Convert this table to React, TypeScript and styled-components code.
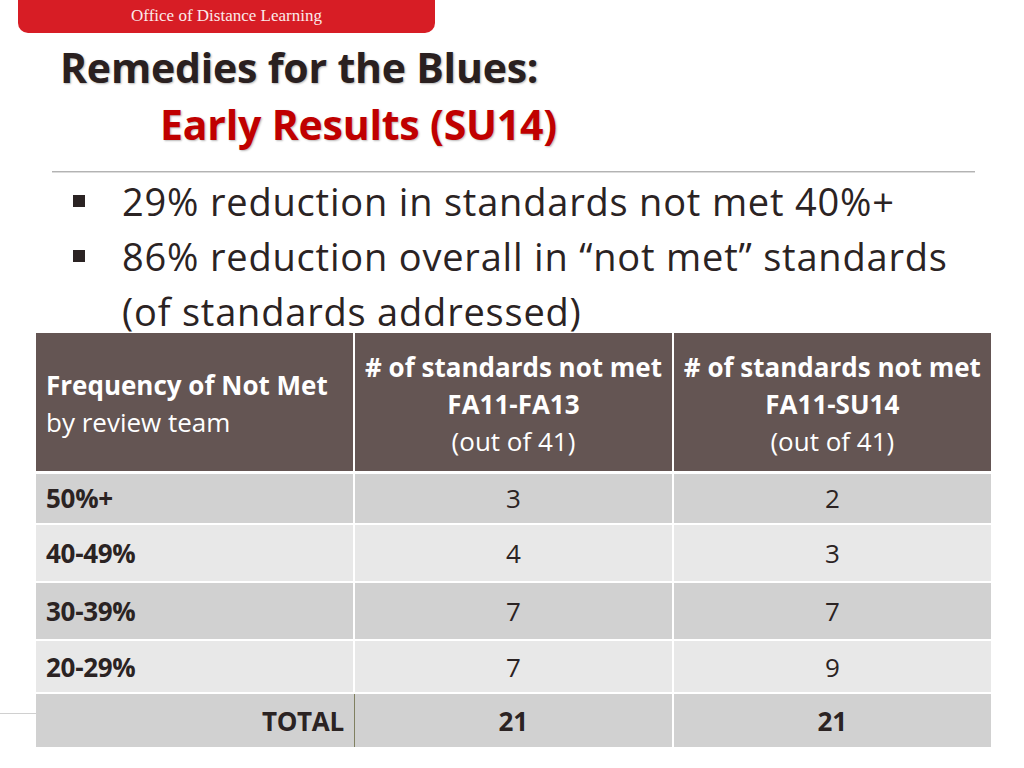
import React from "react";
import styled, { createGlobalStyle } from "styled-components";

const GlobalStyle = createGlobalStyle`
  html, body { margin: 0; padding: 0; background: #ffffff; }
  body { font-family: "Open Sans", Lato, sans-serif; }
`;

const Slide = styled.div`
  position: relative;
  width: 1024px;
  height: 768px;
  overflow: hidden;
  background: #ffffff;
`;

const TopTab = styled.div`
  margin-left: 18px;
  width: 417px;
  height: 33px;
  background: #d71d25;
  border-radius: 0 0 10px 10px;
  display: flex;
  align-items: center;
  justify-content: center;
  color: #fbeaea;
  font-family: "Liberation Serif", "DejaVu Serif", serif;
  font-size: 17px;
  padding-bottom: 2px;
  box-sizing: border-box;
`;

const TitleBlock = styled.h1`
  margin: 6px 0 0 60px;
  font-family: "Open Sans", Lato, sans-serif;
  font-weight: 700;
  font-size: 41px;
  line-height: 57px;
  letter-spacing: -0.2px;
`;

const TitleLine = styled.div<{ $indent?: number; $color: string }>`
  padding-left: ${(p) => p.$indent ?? 0}px;
  color: ${(p) => p.$color};
  text-shadow: 1px 1px 2px rgba(0, 0, 0, 0.28);
`;

const Divider = styled.hr`
  margin: 18px 49px 0 52px;
  border: none;
  height: 1px;
  background: #b3b3b3;
  box-shadow: 0 1px 0 #dcdcdc;
`;

const BulletList = styled.ul`
  list-style: none;
  margin: 2px 0 0 0;
  padding: 0 0 0 73px;
  font-family: "Open Sans", Lato, sans-serif;
  font-size: 38px;
  letter-spacing: 0.8px;
  line-height: 55px;
  color: #2b2323;
`;

const BulletItem = styled.li`
  display: flex;
  align-items: flex-start;
`;

const BulletMark = styled.span`
  flex: 0 0 12px;
  width: 12px;
  height: 12px;
  margin-top: 21px;
  margin-right: 37px;
  background: #2b2323;
`;

const BulletText = styled.span`
  flex: 1;
`;

const TableWrap = styled.div`
  position: relative;
  margin: -6px 0 0 36px;
  width: 955px;
`;

const DataTable = styled.table`
  width: 955px;
  border-collapse: collapse;
  table-layout: fixed;
  font-family: "Open Sans", Lato, sans-serif;
  color: #2b2323;
`;

const HeadCell = styled.th<{ $align: "left" | "center" }>`
  background: #645553;
  color: #ffffff;
  height: 139px;
  padding: ${(p) => (p.$align === "left" ? "5px 10px 0" : "5px 2px 0")};
  text-align: ${(p) => p.$align};
  vertical-align: middle;
  font-size: 26px;
  line-height: 37px;
  font-weight: 400;
  letter-spacing: 0;
  white-space: nowrap;
  border-right: 2px solid #ffffff;
  border-bottom: 3px solid #ffffff;
  box-sizing: border-box;
  &:last-child { border-right: none; }
`;

const Bold = styled.span`
  font-weight: 700;
  display: block;
`;

const Plain = styled.span`
  display: block;
`;

const Row = styled.tr<{ $shade: "dark" | "light"; $h: number; $total?: boolean }>`
  background: ${(p) => (p.$shade === "dark" ? "#d1d1d1" : "#e8e8e8")};
  height: ${(p) => p.$h}px;
  border-bottom: 2px solid #ffffff;
  ${(p) => (p.$total ? "border-top: 1px solid #808060; border-bottom: none;" : "")}
`;

const LabelCell = styled.td<{ $total?: boolean }>`
  padding: 0 10px;
  font-size: 26px;
  font-weight: 700;
  letter-spacing: -0.3px;
  text-align: ${(p) => (p.$total ? "right" : "left")};
  border-right: ${(p) => (p.$total ? "1px solid #808060" : "2px solid #ffffff")};
  vertical-align: middle;
`;

const NumCell = styled.td<{ $bold?: boolean }>`
  text-align: center;
  font-size: 26px;
  font-weight: ${(p) => (p.$bold ? 700 : 400)};
  border-right: 2px solid #ffffff;
  &:last-child { border-right: none; }
`;

const FooterRule = styled.div`
  position: absolute;
  left: 0;
  top: 713px;
  width: 40px;
  height: 1px;
  background: #d0d0d0;
`;

const rows: { label: string; a: string; b: string; shade: "dark" | "light"; h: number }[] = [
  { label: "50%+", a: "3", b: "2", shade: "dark", h: 52 },
  { label: "40-49%", a: "4", b: "3", shade: "light", h: 58 },
  { label: "30-39%", a: "7", b: "7", shade: "dark", h: 58 },
  { label: "20-29%", a: "7", b: "9", shade: "light", h: 53 },
];

export default function App() {
  return (
    <>
      <GlobalStyle />
      <Slide>
        <FooterRule />
        <TopTab>Office of Distance Learning</TopTab>
        <TitleBlock>
          <TitleLine $color="#2a2020">Remedies for the Blues:</TitleLine>
          <TitleLine $color="#c00000" $indent={100}>
            Early Results (SU14)
          </TitleLine>
        </TitleBlock>
        <Divider />
        <BulletList>
          <BulletItem>
            <BulletMark />
            <BulletText>29% reduction in standards not met 40%+</BulletText>
          </BulletItem>
          <BulletItem>
            <BulletMark />
            <BulletText>
              86% reduction overall in “not met” standards
              <br />
              (of standards addressed)
            </BulletText>
          </BulletItem>
        </BulletList>
        <TableWrap>
          <DataTable>
            <thead>
              <tr>
                <HeadCell $align="left">
                  <Bold>Frequency of Not Met</Bold>
                  <Plain>by review team</Plain>
                </HeadCell>
                <HeadCell $align="center">
                  <Bold># of standards not met</Bold>
                  <Bold>FA11-FA13</Bold>
                  <Plain>(out of 41)</Plain>
                </HeadCell>
                <HeadCell $align="center">
                  <Bold># of standards not met</Bold>
                  <Bold>FA11-SU14</Bold>
                  <Plain>(out of 41)</Plain>
                </HeadCell>
              </tr>
            </thead>
            <tbody>
              {rows.map((r) => (
                <Row key={r.label} $shade={r.shade} $h={r.h}>
                  <LabelCell>{r.label}</LabelCell>
                  <NumCell>{r.a}</NumCell>
                  <NumCell>{r.b}</NumCell>
                </Row>
              ))}
              <Row $shade="dark" $h={54} $total>
                <LabelCell $total>TOTAL</LabelCell>
                <NumCell $bold>21</NumCell>
                <NumCell $bold>21</NumCell>
              </Row>
            </tbody>
          </DataTable>
        </TableWrap>
      </Slide>
    </>
  );
}
